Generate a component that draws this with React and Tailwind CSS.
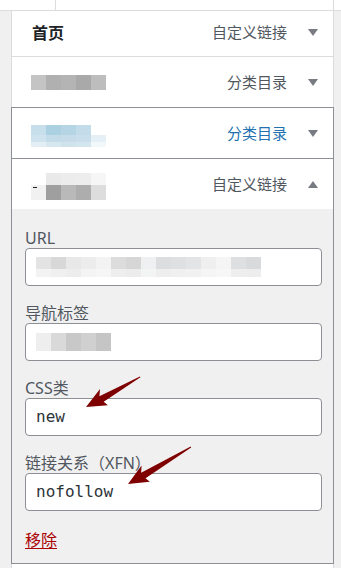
import React from 'react';

const CJK = "font-['Noto_Sans','Noto_Sans_CJK_SC',sans-serif]";

// Down / up caret used on each menu item
const Caret = ({ up }) => (
  <svg width="10" height="7" viewBox="0 0 10 7" className="shrink-0">
    {up ? <polygon points="0,7 10,7 5,0" fill="#787c82" /> : <polygon points="0,0 10,0 5,7" fill="#787c82" />}
  </svg>
);

// Mosaic blocks standing in for redacted text
const Tiles = ({ rows, size = 15, className = '' }) => (
  <div className={`flex flex-col ${className}`}>
    {rows.map((row, i) => (
      <div key={i} className="flex">
        {row.cols.map((c, j) => (
          <div key={j} style={{ width: size, height: row.h, background: c }} />
        ))}
      </div>
    ))}
  </div>
);

const ItemHead = ({ children, type, typeClass = 'text-[#50575e]', up, className = '' }) => (
  <div className={`flex items-center justify-between pl-[19px] pr-[15px] bg-white ${className}`}>
    <div className="flex items-center">{children}</div>
    <div className="flex items-center gap-[21px]">
      <span className={`text-[15px] leading-none ${typeClass}`}>{type}</span>
      <Caret up={up} />
    </div>
  </div>
);

const Field = ({ label, children, mono }) => (
  <div className="flex flex-col">
    <label className="text-[16px] leading-[19px] text-[#50575e]">{label}</label>
    <div className="h-[38px] bg-white border border-[#8c8f94] rounded-[4px] flex items-center pl-[10px] overflow-hidden">
      {mono ? <span className="font-['DejaVu_Sans_Mono',monospace] text-[16px] text-[#2c3338]">{mono}</span> : children}
    </div>
  </div>
);

// Hand-drawn style red arrow: tip at (x,y), tail direction by angle
const Arrow = ({ x, y, angle, len }) => (
  <g transform={`translate(${x} ${y}) rotate(${angle})`}>
    <polygon
      points={`0,0 21,-9 17,-3 ${len},-0.6 ${len},0.4 18,4 20,9`}
      fill="#7f0000"
    />
  </g>
);

export default function App() {
  return (
    <div className={`relative w-[341px] h-[568px] overflow-hidden bg-[#f0f0f1] ${CJK}`}>
      {/* top strip */}
      <div className="h-[11px] bg-white border-b border-[#dcdcde] flex">
        <div className="w-[56px] border-r border-[#dcdcde]" />
        <div className="w-[278px] border-r border-[#dcdcde]" />
      </div>

      <div className="pl-[11px] w-[334px]">
        {/* item 1 */}
        <ItemHead type="自定义链接" className="h-[46px] border-x border-b border-[#dcdcde] pb-[2px]">
          <span className="text-[16px] font-bold text-[#1d2327] leading-none ml-[1px]">首页</span>
        </ItemHead>

        {/* item 2 */}
        <ItemHead type="分类目录" className="h-[50px] border-x border-[#dcdcde]">
          <Tiles rows={[{ h: 15, cols: ['#c4c4c4', '#b0b0b0', '#b4b4b4', '#a9a9a9', '#bdbdbd'] }]} className="mt-[1px]" />
        </ItemHead>

        {/* item 3 */}
        <ItemHead type="分类目录" typeClass="text-[#2271b1]" className="h-[52px] border border-[#8c8f94]">
          <Tiles
            className="mt-[6px]"
            rows={[
              { h: 10, cols: ['#c6dfeb', '#abd0e2', '#b5d5e5', '#c3dce9', '#ffffff'] },
              { h: 7, cols: ['#cfe3ee', '#c4dce9', '#c6dde9', '#c8dfeb', '#e4f0f5'] },
              { h: 5, cols: ['#e4eff5', '#d6e7f0', '#d0e3ed', '#d3e5ee', '#f2f7fa'] },
            ]}
          />
        </ItemHead>

        {/* item 4, open */}
        <div className="border-x border-b border-[#8c8f94]">
          <ItemHead type="自定义链接" up className="h-[50px]">
            <div className="relative mt-[4px]">
              <Tiles
                rows={[
                  { h: 12, cols: ['#ffffff', '#e9e9e9', '#ececec', '#ededed', '#f6f6f6'] },
                  { h: 15, cols: ['#f1f1f1', '#9f9f9f', '#b9b9b9', '#adadad', '#dddddd'] },
                ]}
              />
              <div className="absolute left-[2px] top-[14px] w-[4px] h-[1px] bg-[#1d2327]" />
            </div>
          </ItemHead>

          <div className="h-[354px] bg-[#f0f0f1] pt-[20px] pl-[13px] pr-[11px] flex flex-col gap-[18px]">
            <Field label="URL">
              <Tiles
                size={15}
                rows={[
                  { h: 12, cols: ['#e3e3e3', '#d8d8d8', '#e8e8e8', '#ececec', '#f3f3f3', '#dcdcdc', '#d6d6d6', '#eef0f1', '#dcdddf', '#dfe0e1', '#e3e4e5', '#efefef', '#f5f5f5', '#dedfe0', '#d9dadb'] },
                  { h: 8, cols: ['#f3f3f3', '#f0f0f0', '#ededed', '#f4f4f4', '#f6f6f6', '#eeeeee', '#ececec', '#f3f4f4', '#eeeeef', '#f0f0f0', '#f1f1f1', '#f5f5f5', '#f7f7f7', '#eeeeee', '#ededed'] },
                ]}
              />
            </Field>
            <Field label="导航标签">
              <Tiles
                size={15}
                rows={[
                  { h: 18, cols: ['#eeeeee', '#d9d9d9', '#c8c8c8', '#d0d0d0', '#c5c5c5'] },
                ]}
              />
            </Field>
            <Field label="CSS类" mono="new" />
            <Field label="链接关系（XFN）" mono="nofollow" />
            <a className="mt-[1px] text-[16px] leading-[21px] text-[#aa0000] underline underline-offset-2 w-fit">移除</a>
          </div>
        </div>

        {/* next item peeking */}
        <div className="h-[8px] bg-white border-x border-[#dcdcde]" />
      </div>

      {/* annotation arrows */}
      <svg className="absolute inset-0 pointer-events-none" width="341" height="568">
        <Arrow x={86} y={407} angle={-29} len={62} />
        <Arrow x={128} y={484} angle={-30.4} len={73} />
      </svg>
    </div>
  );
}
